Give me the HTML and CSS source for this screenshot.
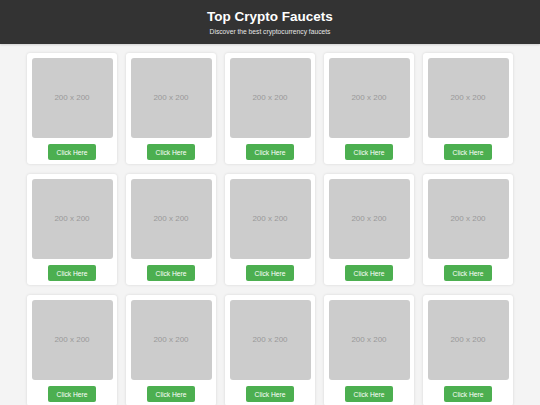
FILE: index.html
```html
<!DOCTYPE html>
<html>
<head>
<meta charset="utf-8">
<link rel="stylesheet" href="styles.css">
</head>
<body>
<header class="header">
  <h1 class="title">Top Crypto Faucets</h1>
  <p class="subtitle">Discover the best cryptocurrency faucets</p>
</header>
<main class="grid">
  <div class="card"><div class="thumb">200 x 200</div><a class="btn">Click Here</a></div>
  <div class="card"><div class="thumb">200 x 200</div><a class="btn">Click Here</a></div>
  <div class="card"><div class="thumb">200 x 200</div><a class="btn">Click Here</a></div>
  <div class="card"><div class="thumb">200 x 200</div><a class="btn">Click Here</a></div>
  <div class="card"><div class="thumb">200 x 200</div><a class="btn">Click Here</a></div>
  <div class="card"><div class="thumb">200 x 200</div><a class="btn">Click Here</a></div>
  <div class="card"><div class="thumb">200 x 200</div><a class="btn">Click Here</a></div>
  <div class="card"><div class="thumb">200 x 200</div><a class="btn">Click Here</a></div>
  <div class="card"><div class="thumb">200 x 200</div><a class="btn">Click Here</a></div>
  <div class="card"><div class="thumb">200 x 200</div><a class="btn">Click Here</a></div>
  <div class="card"><div class="thumb">200 x 200</div><a class="btn">Click Here</a></div>
  <div class="card"><div class="thumb">200 x 200</div><a class="btn">Click Here</a></div>
  <div class="card"><div class="thumb">200 x 200</div><a class="btn">Click Here</a></div>
  <div class="card"><div class="thumb">200 x 200</div><a class="btn">Click Here</a></div>
  <div class="card"><div class="thumb">200 x 200</div><a class="btn">Click Here</a></div>
</main>
</body>
</html>
```
FILE: styles.css
```css
* { box-sizing: border-box; }
html, body { margin: 0; padding: 0; }
body {
  background: #f4f4f4;
  font-family: "Liberation Sans", Arial, sans-serif;
  overflow: hidden;
}
.header {
  background: #333333;
  color: #fff;
  height: 44px;
  display: flex;
  flex-direction: column;
  align-items: center;
  padding-top: 8.5px;
  box-shadow: 0 1px 2px rgba(0,0,0,0.15);
}
.title {
  margin: 0;
  font-size: 13.5px;
  line-height: 16px;
  font-weight: bold;
}
.subtitle {
  margin: 3px 0 0;
  font-size: 6.7px;
  line-height: 8px;
  color: #e6e6e6;
}
.grid {
  display: grid;
  grid-template-columns: repeat(5, 90px);
  column-gap: 9px;
  row-gap: 10px;
  justify-content: center;
  padding-top: 9px;
}
.card {
  background: #fff;
  border-radius: 3px;
  box-shadow: 0 0 3px rgba(0,0,0,0.12);
  padding: 4.5px 4.5px 4px;
  display: flex;
  flex-direction: column;
  align-items: center;
  height: 111px;
}
.thumb {
  width: 81px;
  height: 81px;
  background: #cccccc;
  border-radius: 3px;
  color: #999999;
  font-size: 8px;
  display: flex;
  align-items: center;
  justify-content: center;
}
.btn {
  margin-top: 6px;
  width: 48px;
  height: 16px;
  background: #4caf50;
  color: #fff;
  border-radius: 2px;
  font-size: 6.7px;
  display: flex;
  align-items: center;
  justify-content: center;
}
```
